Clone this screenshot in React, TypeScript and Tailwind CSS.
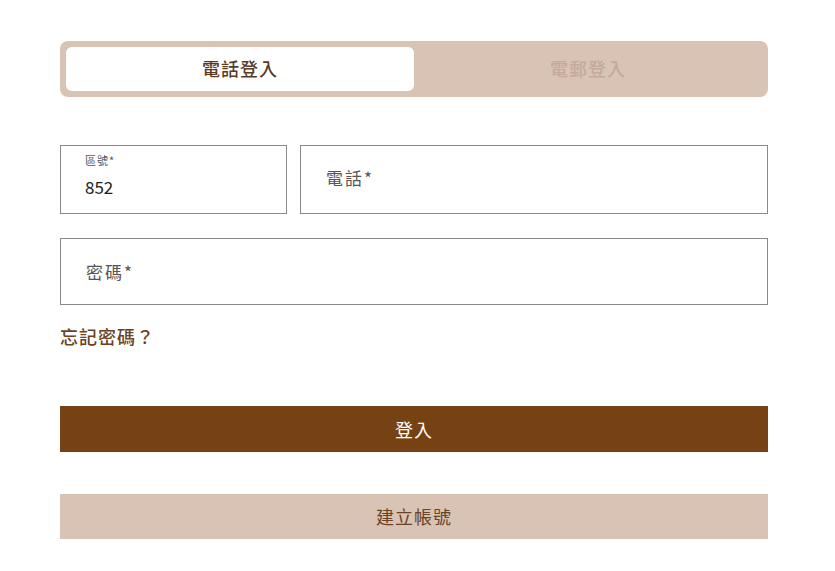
import React from "react";

export default function App() {
  const font = { fontFamily: '"Noto Sans CJK TC", "Noto Sans", sans-serif' };
  return (
    <div className="min-h-[571px] w-[835px] bg-white" style={font}>
      <div className="ml-[60px] w-[708px] pt-[41px]">
        <div className="flex h-[56px] rounded-[8px] bg-[#d8c3b5] p-[6px]">
          <div className="flex w-[348px] items-center justify-center rounded-[6px] bg-white pb-[1px] text-[18px] font-medium tracking-[1px] text-[#5b3a24]">
            電話登入
          </div>
          <div className="flex flex-1 items-center justify-center pb-[1px] text-[18px] font-medium tracking-[1px] text-[#c4aa9a]">
            電郵登入
          </div>
        </div>

        <div className="mt-[48px] flex gap-[13px]">
          <div className="flex h-[69px] w-[227px] flex-col border border-[#8a8a8a] pl-[24px] pt-[7px]">
            <span className="text-[11px] leading-[14px] tracking-[1px] text-[#555]">區號*</span>
            <span className="mt-[10px] text-[17px] leading-[20px] text-[#222]">852</span>
          </div>
          <div className="flex h-[69px] flex-1 items-center border border-[#8a8a8a] pl-[25px] pb-[4px]">
            <span className="text-[17px] tracking-[2px] text-[#555]">電話*</span>
          </div>
        </div>

        <div className="mt-[24px] flex h-[67px] items-center border border-[#8a8a8a] pl-[25px]">
          <span className="text-[17px] tracking-[2px] text-[#555]">密碼*</span>
        </div>

        <div className="mt-[20px] text-[18px] font-medium leading-[22px] tracking-[1px] text-[#6b4226]">忘記密碼？</div>

        <button className="mt-[59px] flex h-[46px] w-full items-center justify-center bg-[#774213] text-[18px] tracking-[1px] text-white">
          登入
        </button>

        <button className="mt-[42px] flex h-[45px] w-full items-center justify-center bg-[#d8c3b5] text-[18px] tracking-[1px] text-[#6b4226]">
          建立帳號
        </button>
      </div>
    </div>
  );
}
